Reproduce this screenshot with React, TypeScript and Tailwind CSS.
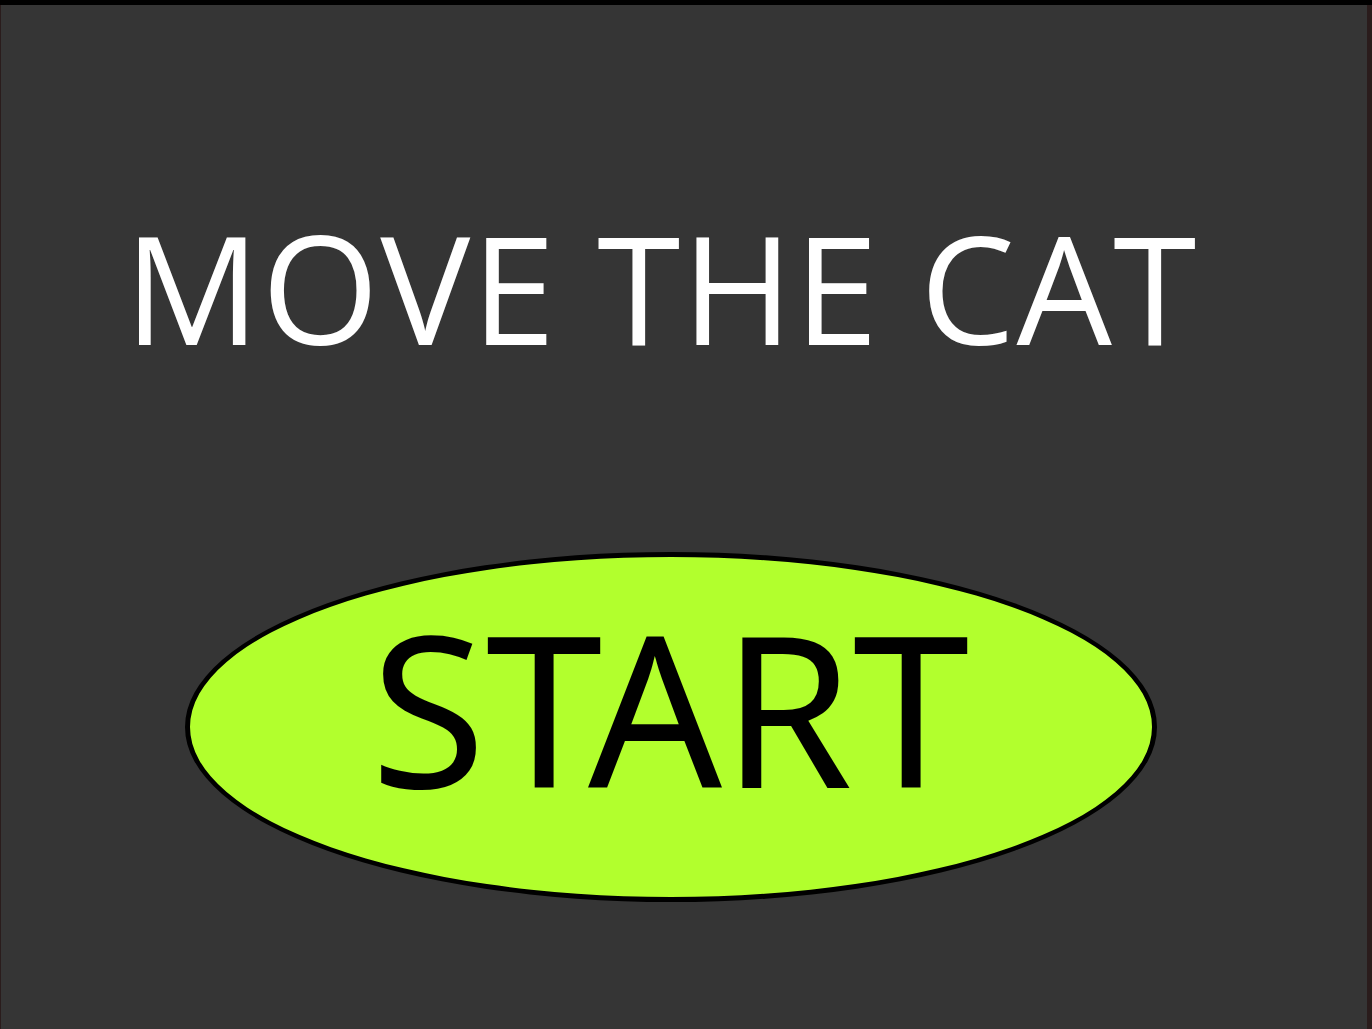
export default function App() {
  return (
    <div className="w-[1372px] h-[1029px] bg-black flex flex-col overflow-hidden" style={{ fontFamily: '"Open Sans", "Noto Sans", sans-serif' }}>
      <div className="h-[5px] shrink-0" />
      <div className="flex flex-1">
        <div className="w-px bg-[#2a1c1c]" />
        <div className="flex-1 bg-[#353535] flex flex-col items-center">
          <div className="h-[196px] shrink-0" />
          <h1 className="text-white text-[151px] tracking-[1.3px] leading-[171px] whitespace-nowrap ml-[-46px]">MOVE THE CAT</h1>
          <div className="h-[180px] shrink-0" />
          <button
            className="w-[972px] h-[350px] rounded-[50%] border-[5px] border-black bg-[#b2ff2d] flex items-center justify-center text-black text-[210px] leading-none pb-[40px] pr-[2px] ml-[-26px]"
            style={{ fontFamily: '"Noto Sans", "Open Sans", sans-serif' }}
          >
            START
          </button>
        </div>
        <div className="w-[5px] bg-[#2a1c1c]" />
      </div>
    </div>
  );
}
